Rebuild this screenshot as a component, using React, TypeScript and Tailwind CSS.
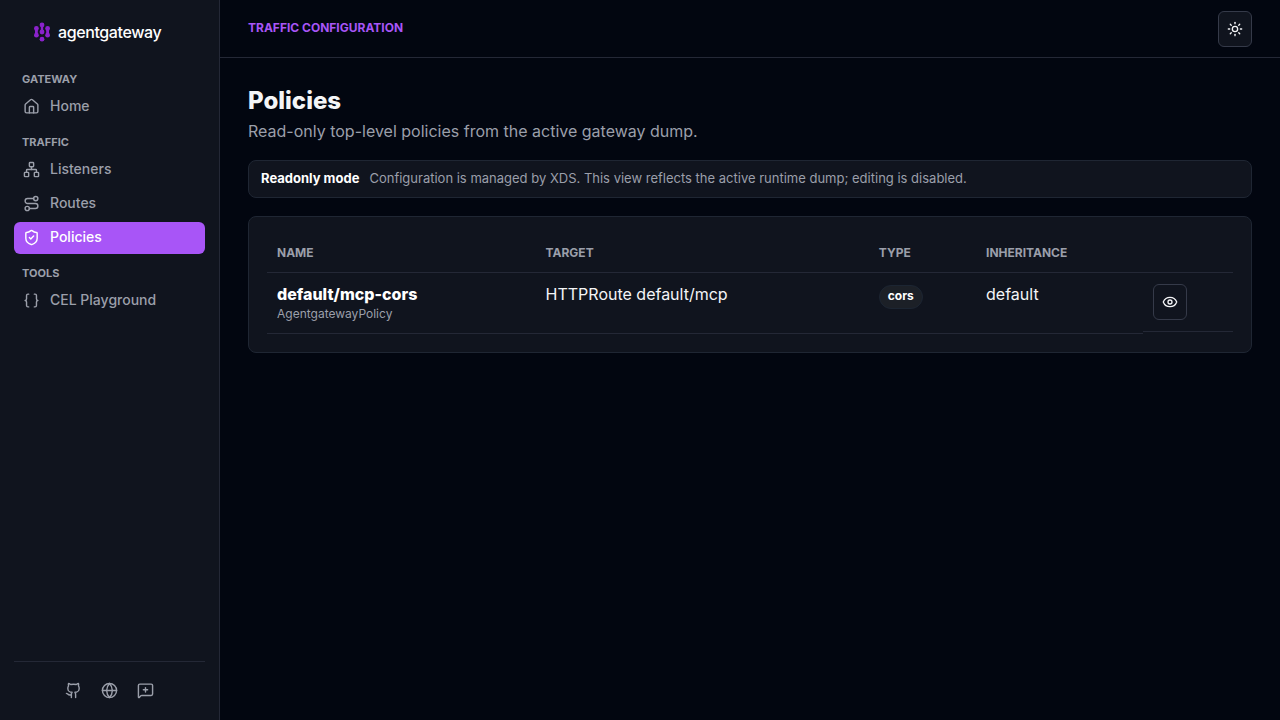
import {
  Braces,
  Eye,
  Github,
  Globe,
  House,
  MessageSquarePlus,
  Network,
  Route,
  ShieldCheck,
  Sun,
  type LucideIcon,
} from 'lucide-react'
import clsx from 'clsx'

type NavItem = { label: string; icon: LucideIcon; active?: boolean }

const sections: { title: string; items: NavItem[] }[] = [
  { title: 'Gateway', items: [{ label: 'Home', icon: House }] },
  {
    title: 'Traffic',
    items: [
      { label: 'Listeners', icon: Network },
      { label: 'Routes', icon: Route },
      { label: 'Policies', icon: ShieldCheck, active: true },
    ],
  },
  { title: 'Tools', items: [{ label: 'CEL Playground', icon: Braces }] },
]

const links = [
  { label: 'GitHub', icon: Github },
  { label: 'Website', icon: Globe },
  { label: 'Feedback', icon: MessageSquarePlus },
]

const policies = [
  {
    name: 'default/mcp-cors',
    kind: 'AgentgatewayPolicy',
    target: 'HTTPRoute default/mcp',
    type: 'cors',
    inheritance: 'default',
  },
]

function Logo() {
  return (
    <div className="flex items-center gap-2 px-5 h-9">
      <svg width="16" height="20" viewBox="0 0 16 20" fill="#8b22cc" aria-hidden="true">
        <circle cx="2.4" cy="6.5" r="2.4" />
        <circle cx="2.4" cy="13.2" r="2.4" />
        <rect x="1" y="6" width="2.8" height="7" />
        <circle cx="8" cy="2.9" r="2.4" />
        <circle cx="8" cy="10" r="2.4" />
        <rect x="6.8" y="3" width="2.4" height="7" />
        <circle cx="13.6" cy="6.5" r="2.4" />
        <circle cx="13.6" cy="13.2" r="2.4" />
        <rect x="12.2" y="6" width="2.8" height="7" />
        <circle cx="8" cy="17.2" r="2.4" />
      </svg>
      <span className="text-base leading-5 font-medium tracking-tight text-white">agentgateway</span>
    </div>
  )
}

function Sidebar() {
  return (
    <aside className="flex w-55 shrink-0 flex-col border-r border-[#242836] bg-[#10141e] p-3.5">
      <Logo />
      <nav className="mt-[21px] flex flex-1 flex-col gap-[11px]">
        {sections.map((section) => (
          <div key={section.title}>
            <h2 className="mb-1 px-2 text-[11px] leading-4 font-bold uppercase text-[#9b9faa]">
              {section.title}
            </h2>
            <div className="flex flex-col gap-0.5">
              {section.items.map(({ label, icon: Icon, active }) => (
                <a
                  key={label}
                  href="#"
                  className={clsx(
                    'flex h-8 items-center gap-2.5 rounded-md px-[9px] pb-0.5 text-sm font-medium',
                    active ? 'bg-[#a855f7] text-white' : 'text-[#9b9faa]'
                  )}
                >
                  <Icon size={17} strokeWidth={2} />
                  {label}
                </a>
              ))}
            </div>
          </div>
        ))}
      </nav>
      <div className="flex justify-center gap-1 border-t border-[#242836] pt-3">
        {links.map(({ label, icon: Icon }) => (
          <a key={label} href="#" aria-label={label} className="flex size-8 items-center justify-center text-[#9b9faa]">
            <Icon size={17} />
          </a>
        ))}
      </div>
    </aside>
  )
}

function IconButton({ label, icon: Icon }: { label: string; icon: LucideIcon }) {
  return (
    <button
      aria-label={label}
      className="flex h-9 w-[34px] items-center justify-center rounded-md border border-[#353a49] bg-[#10141e] text-[#f4f5f7]"
    >
      <Icon size={16} />
    </button>
  )
}

function PolicyTable() {
  return (
    <table className="w-full table-fixed border-separate border-spacing-0 text-left">
      <colgroup>
        <col className="w-[27.8%]" />
        <col className="w-[34.5%]" />
        <col className="w-[11.1%]" />
        <col className="w-[17.3%]" />
        <col className="w-[9.3%]" />
      </colgroup>
      <thead>
        <tr className="text-xs leading-4 uppercase text-[#9b9faa]">
          <th className="border-b border-[#242836] px-2.5 pt-2.5 pb-[11px] font-bold">Name</th>
          <th className="border-b border-[#242836] px-2.5 pt-2.5 pb-[11px] font-bold">Target</th>
          <th className="border-b border-[#242836] px-2.5 pt-2.5 pb-[11px] font-bold">Type</th>
          <th className="border-b border-[#242836] px-2.5 pt-2.5 pb-[11px] font-bold">Inheritance</th>
          <th className="border-b border-[#242836] px-2.5 pt-2.5 pb-[11px]" />
        </tr>
      </thead>
      <tbody>
        {policies.map((policy) => (
          <tr key={policy.name} className="align-top">
            <td className="border-b border-[#242836] px-2.5 pt-[9px] pb-[11px]">
              <strong className="block font-extrabold text-white">{policy.name}</strong>
              <span className="block text-xs text-[#9b9faa]">{policy.kind}</span>
            </td>
            <td className="border-b border-[#242836] px-2.5 pt-[9px] pb-[11px]">{policy.target}</td>
            <td className="border-b border-[#242836] px-2.5 py-3">
              <span className="flex h-6 w-fit items-center rounded-full border border-[#1c2532] bg-[#1c2027] px-2 pb-0.5 text-xs font-bold text-white">
                {policy.type}
              </span>
            </td>
            <td className="border-b border-[#242836] px-2.5 pt-[9px] pb-[11px]">{policy.inheritance}</td>
            <td className="flex border-b border-[#242836] px-2.5 py-[11px]">
              <IconButton label="View policy" icon={Eye} />
            </td>
          </tr>
        ))}
      </tbody>
    </table>
  )
}

export default function App() {
  return (
    <div className="flex min-h-screen bg-[#020610] font-['Inter','Liberation_Sans',sans-serif] text-[#f4f5f7]">
      <Sidebar />
      <div className="flex min-w-0 flex-1 flex-col">
        <header className="flex items-center justify-between border-b border-[#242836] px-7 pt-[11px] pb-2.5">
          <span className="pb-0.5 text-xs font-bold uppercase text-[#a855f7]">Traffic Configuration</span>
          <IconButton label="Toggle theme" icon={Sun} />
        </header>
        <main className="px-7 pt-7">
          <h1 className="text-2xl leading-[30px] font-extrabold">Policies</h1>
          <p className="mt-[3px] leading-6 text-[#9b9faa]">
            Read-only top-level policies from the active gateway dump.
          </p>
          <div className="mt-[17px] flex items-center gap-2.5 rounded-lg border border-[#1f2633] bg-[#10141e] px-3 pt-[7px] pb-[9px] text-[13px] leading-5 text-[#9b9faa]">
            <strong className="font-bold text-white">Readonly mode</strong>
            <span>Configuration is managed by XDS. This view reflects the active runtime dump; editing is disabled.</span>
          </div>
          <section className="mt-[18px] rounded-lg border border-[#1f2633] bg-[#10141e] p-[18px]">
            <PolicyTable />
          </section>
        </main>
      </div>
    </div>
  )
}
